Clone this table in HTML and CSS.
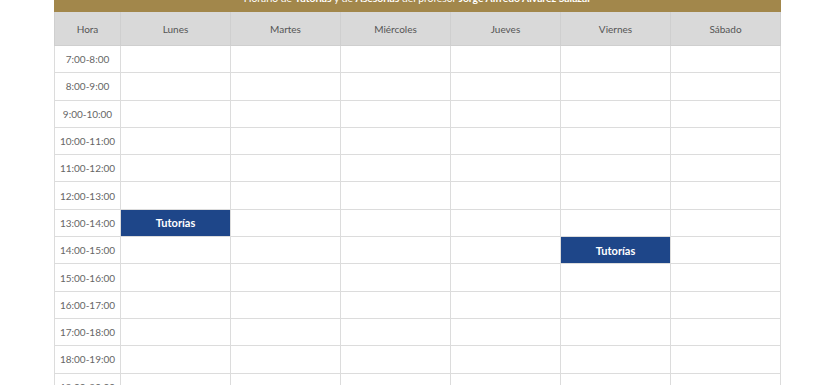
FILE: index.html
```html
<!DOCTYPE html>
<html lang="es">
<head>
<meta charset="utf-8">
<link rel="stylesheet" href="styles.css">
</head>
<body>
<div class="wrap">
  <div class="banner">Horario de <b>Tutorías</b> y de <b>Asesorías</b> del profesor <b>Jorge Alfredo Álvarez Salazar</b></div>
  <table class="sched">
    <colgroup><col class="c-hora"><col class="c-day"><col class="c-day"><col class="c-day"><col class="c-day"><col class="c-day"><col class="c-day"></colgroup>
    <thead>
      <tr><th>Hora</th><th>Lunes</th><th>Martes</th><th>Miércoles</th><th>Jueves</th><th>Viernes</th><th>Sábado</th></tr>
    </thead>
    <tbody>
      <tr><td class="t">7:00-8:00</td><td></td><td></td><td></td><td></td><td></td><td></td></tr>
      <tr><td class="t">8:00-9:00</td><td></td><td></td><td></td><td></td><td></td><td></td></tr>
      <tr><td class="t">9:00-10:00</td><td></td><td></td><td></td><td></td><td></td><td></td></tr>
      <tr><td class="t">10:00-11:00</td><td></td><td></td><td></td><td></td><td></td><td></td></tr>
      <tr><td class="t">11:00-12:00</td><td></td><td></td><td></td><td></td><td></td><td></td></tr>
      <tr><td class="t">12:00-13:00</td><td></td><td></td><td></td><td></td><td></td><td></td></tr>
      <tr><td class="t">13:00-14:00</td><td class="tut">Tutorías</td><td></td><td></td><td></td><td></td><td></td></tr>
      <tr><td class="t">14:00-15:00</td><td></td><td></td><td></td><td></td><td class="tut">Tutorías</td><td></td></tr>
      <tr><td class="t">15:00-16:00</td><td></td><td></td><td></td><td></td><td></td><td></td></tr>
      <tr><td class="t">16:00-17:00</td><td></td><td></td><td></td><td></td><td></td><td></td></tr>
      <tr><td class="t">17:00-18:00</td><td></td><td></td><td></td><td></td><td></td><td></td></tr>
      <tr><td class="t">18:00-19:00</td><td></td><td></td><td></td><td></td><td></td><td></td></tr>
      <tr><td class="t">19:00-20:00</td><td></td><td></td><td></td><td></td><td></td><td></td></tr>
    </tbody>
  </table>
</div>
</body>
</html>
```
FILE: styles.css
```css
html, body {
  margin: 0;
  padding: 0;
  background: #fff;
  font-family: Lato, "Noto Sans", sans-serif;
}
.wrap {
  width: 727px;
  margin: -20px 0 0 54px;
}
.banner {
  background: #a2874b;
  color: #fff;
  text-align: center;
  font-size: 10.3px;
  line-height: 16px;
  padding: 10px 0 6px;
}
.banner b { font-weight: 700; }
.sched {
  border-collapse: collapse;
  width: 727px;
  table-layout: fixed;
}
.c-hora { width: 66px; }
.c-day { width: 110px; }
.sched th {
  background: #d9d9d9;
  color: #555;
  font-weight: 400;
  font-size: 10px;
  height: 33px;
  padding: 0;
  border: 1px solid #cfcfcf;
  border-top: none;
}
.sched td {
  height: 26.3px;
  padding: 0;
  border: 1px solid #dcdcdc;
  text-align: center;
  font-size: 10px;
  font-weight: 400;
  color: #666;
}
.sched td.tut {
  background: #1e4689;
  color: #fff;
  font-weight: 700;
  font-size: 11px;
}
```
